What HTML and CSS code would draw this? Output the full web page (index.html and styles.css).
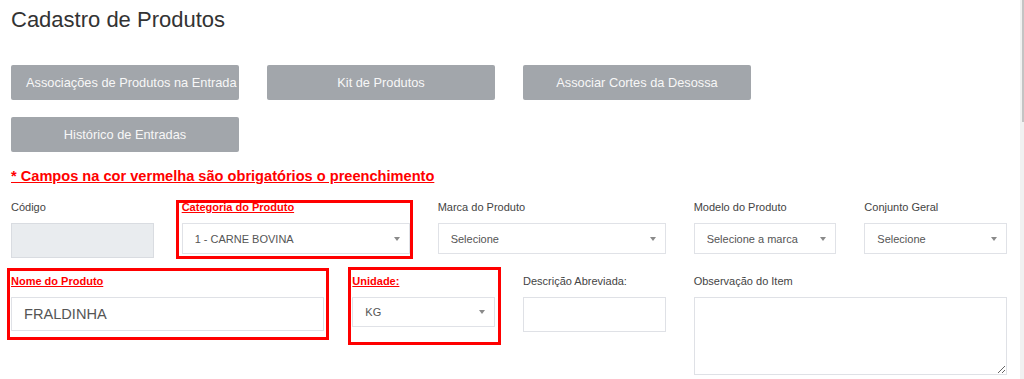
FILE: index.html
```html
<!DOCTYPE html>
<html lang="pt-BR">
<head>
<meta charset="utf-8">
<title>Cadastro de Produtos</title>
<link rel="stylesheet" href="styles.css">
</head>
<body>
<div class="page">
  <h1 class="title">Cadastro de Produtos</h1>

  <div class="btn-row">
    <button class="btn">Associações de Produtos na Entrada</button>
    <button class="btn">Kit de Produtos</button>
    <button class="btn">Associar Cortes da Desossa</button>
  </div>
  <div class="btn-row">
    <button class="btn">Histórico de Entradas</button>
  </div>

  <p class="notice">* Campos na cor vermelha são obrigatórios o preenchimento</p>

  <div class="form-row">
    <div class="field span-2">
      <label class="label">Código</label>
      <div class="input input-disabled"></div>
    </div>
    <div class="field span-3 mark mark-cat">
      <label class="label label-req">Categoria do Produto</label>
      <div class="select"><span class="select-text">1 - CARNE BOVINA</span><span class="caret"></span></div>
    </div>
    <div class="field span-3">
      <label class="label">Marca do Produto</label>
      <div class="select"><span class="select-text">Selecione</span><span class="caret"></span></div>
    </div>
    <div class="field span-2">
      <label class="label">Modelo do Produto</label>
      <div class="select"><span class="select-text">Selecione a marca</span><span class="caret"></span></div>
    </div>
    <div class="field span-2">
      <label class="label">Conjunto Geral</label>
      <div class="select"><span class="select-text">Selecione</span><span class="caret"></span></div>
    </div>
  </div>

  <div class="form-row">
    <div class="field span-4 mark mark-nome">
      <label class="label label-req">Nome do Produto</label>
      <div class="input input-big">FRALDINHA</div>
    </div>
    <div class="field span-2 mark mark-un">
      <label class="label label-req">Unidade:</label>
      <div class="select select-short"><span class="select-text">KG</span><span class="caret"></span></div>
    </div>
    <div class="field span-2">
      <label class="label">Descrição Abreviada:</label>
      <div class="input"></div>
    </div>
    <div class="field span-4">
      <label class="label">Observação do Item</label>
      <textarea class="textarea"></textarea>
    </div>
  </div>
</div>
<div class="scrollbar"><div class="scroll-thumb"></div></div>
</body>
</html>
```

FILE: styles.css
```css
* { box-sizing: border-box; }

html, body {
  margin: 0;
  padding: 0;
  background: #ffffff;
  overflow: hidden;
}

body {
  font-family: "Liberation Sans", Arial, sans-serif;
  color: #333333;
}

.page {
  width: 996px;
  margin-left: 11px;
}

.title {
  margin: 7px 0 0 0;
  font-size: 22px;
  line-height: 25px;
  font-weight: normal;
  color: #333333;
}

.btn-row {
  display: flex;
  gap: 28px;
  margin-top: 33px;
}
.btn-row + .btn-row { margin-top: 17px; }

.btn {
  display: block;
  width: 228px;
  height: 35px;
  padding: 0 15px;
  border: none;
  border-radius: 2px;
  background: #a2a6ab;
  color: #f7f7f7;
  font-family: "Liberation Sans", Arial, sans-serif;
  font-size: 12.8px;
  line-height: 35px;
  text-align: center;
  white-space: nowrap;
  overflow: hidden;
}

.notice {
  margin: 16px 0 0 0;
  font-size: 14.6px;
  line-height: 17px;
  font-weight: bold;
  color: #ff0000;
  text-decoration: underline;
}

.form-row {
  display: grid;
  grid-template-columns: repeat(12, 1fr);
  column-gap: 28px;
  margin-top: 16px;
  align-items: start;
}
.form-row + .form-row { margin-top: 17px; }

.span-2 { grid-column: span 2; }
.span-3 { grid-column: span 3; }
.span-4 { grid-column: span 4; }

.field {
  display: flex;
  flex-direction: column;
  gap: 9px;
}

.label {
  font-size: 11px;
  line-height: 13px;
  color: #444444;
  white-space: nowrap;
}
.label-req {
  color: #ff0000;
  font-weight: bold;
  text-decoration: underline;
}

.input {
  height: 35px;
  border: 1px solid #dfe1e6;
  background: #ffffff;
  padding: 0 12px;
  display: flex;
  align-items: center;
  font-size: 11px;
  color: #555555;
}
.input-disabled {
  background: #e9ecef;
  border-color: #d9dce1;
}
.input-big {
  height: 34px;
  font-size: 14.6px;
  color: #555555;
}

.select {
  height: 31px;
  border: 1px solid #e0e2e7;
  background: #ffffff;
  padding: 0 9px 0 12px;
  display: flex;
  align-items: center;
  justify-content: space-between;
  font-size: 11px;
  color: #555555;
}
.select-short { height: 30px; }

.select-text { white-space: nowrap; }

.caret {
  width: 0;
  height: 0;
  border-left: 3.5px solid transparent;
  border-right: 3.5px solid transparent;
  border-top: 4px solid #8a8a8a;
  flex: none;
}

.textarea {
  display: block;
  width: 100%;
  height: 78px;
  border: 1px solid #dfe1e6;
  border-radius: 0;
  padding: 6px 12px;
  resize: both;
  font-family: "Liberation Sans", Arial, sans-serif;
  font-size: 11px;
  outline: none;
}

/* red annotation boxes drawn over the required fields */
.mark { position: relative; }
.mark::after {
  content: "";
  position: absolute;
  border: 3px solid #ff0000;
  pointer-events: none;
}
.mark-cat::after  { left: -6px; top: -1px; right: -3px; bottom: -5px; }
.mark-nome::after { left: -4px; top: -7px; right: -5px; bottom: -9px; }
.mark-un::after   { left: -4px; top: -8px; right: -6px; bottom: -18px; }

/* window scrollbar */
.scrollbar {
  position: fixed;
  top: 0;
  right: 0;
  width: 4px;
  height: 100%;
  background: #f1f1f1;
}
.scroll-thumb {
  margin-left: 2px;
  width: 2px;
  height: 122px;
  background: #c4c4c4;
}
```
